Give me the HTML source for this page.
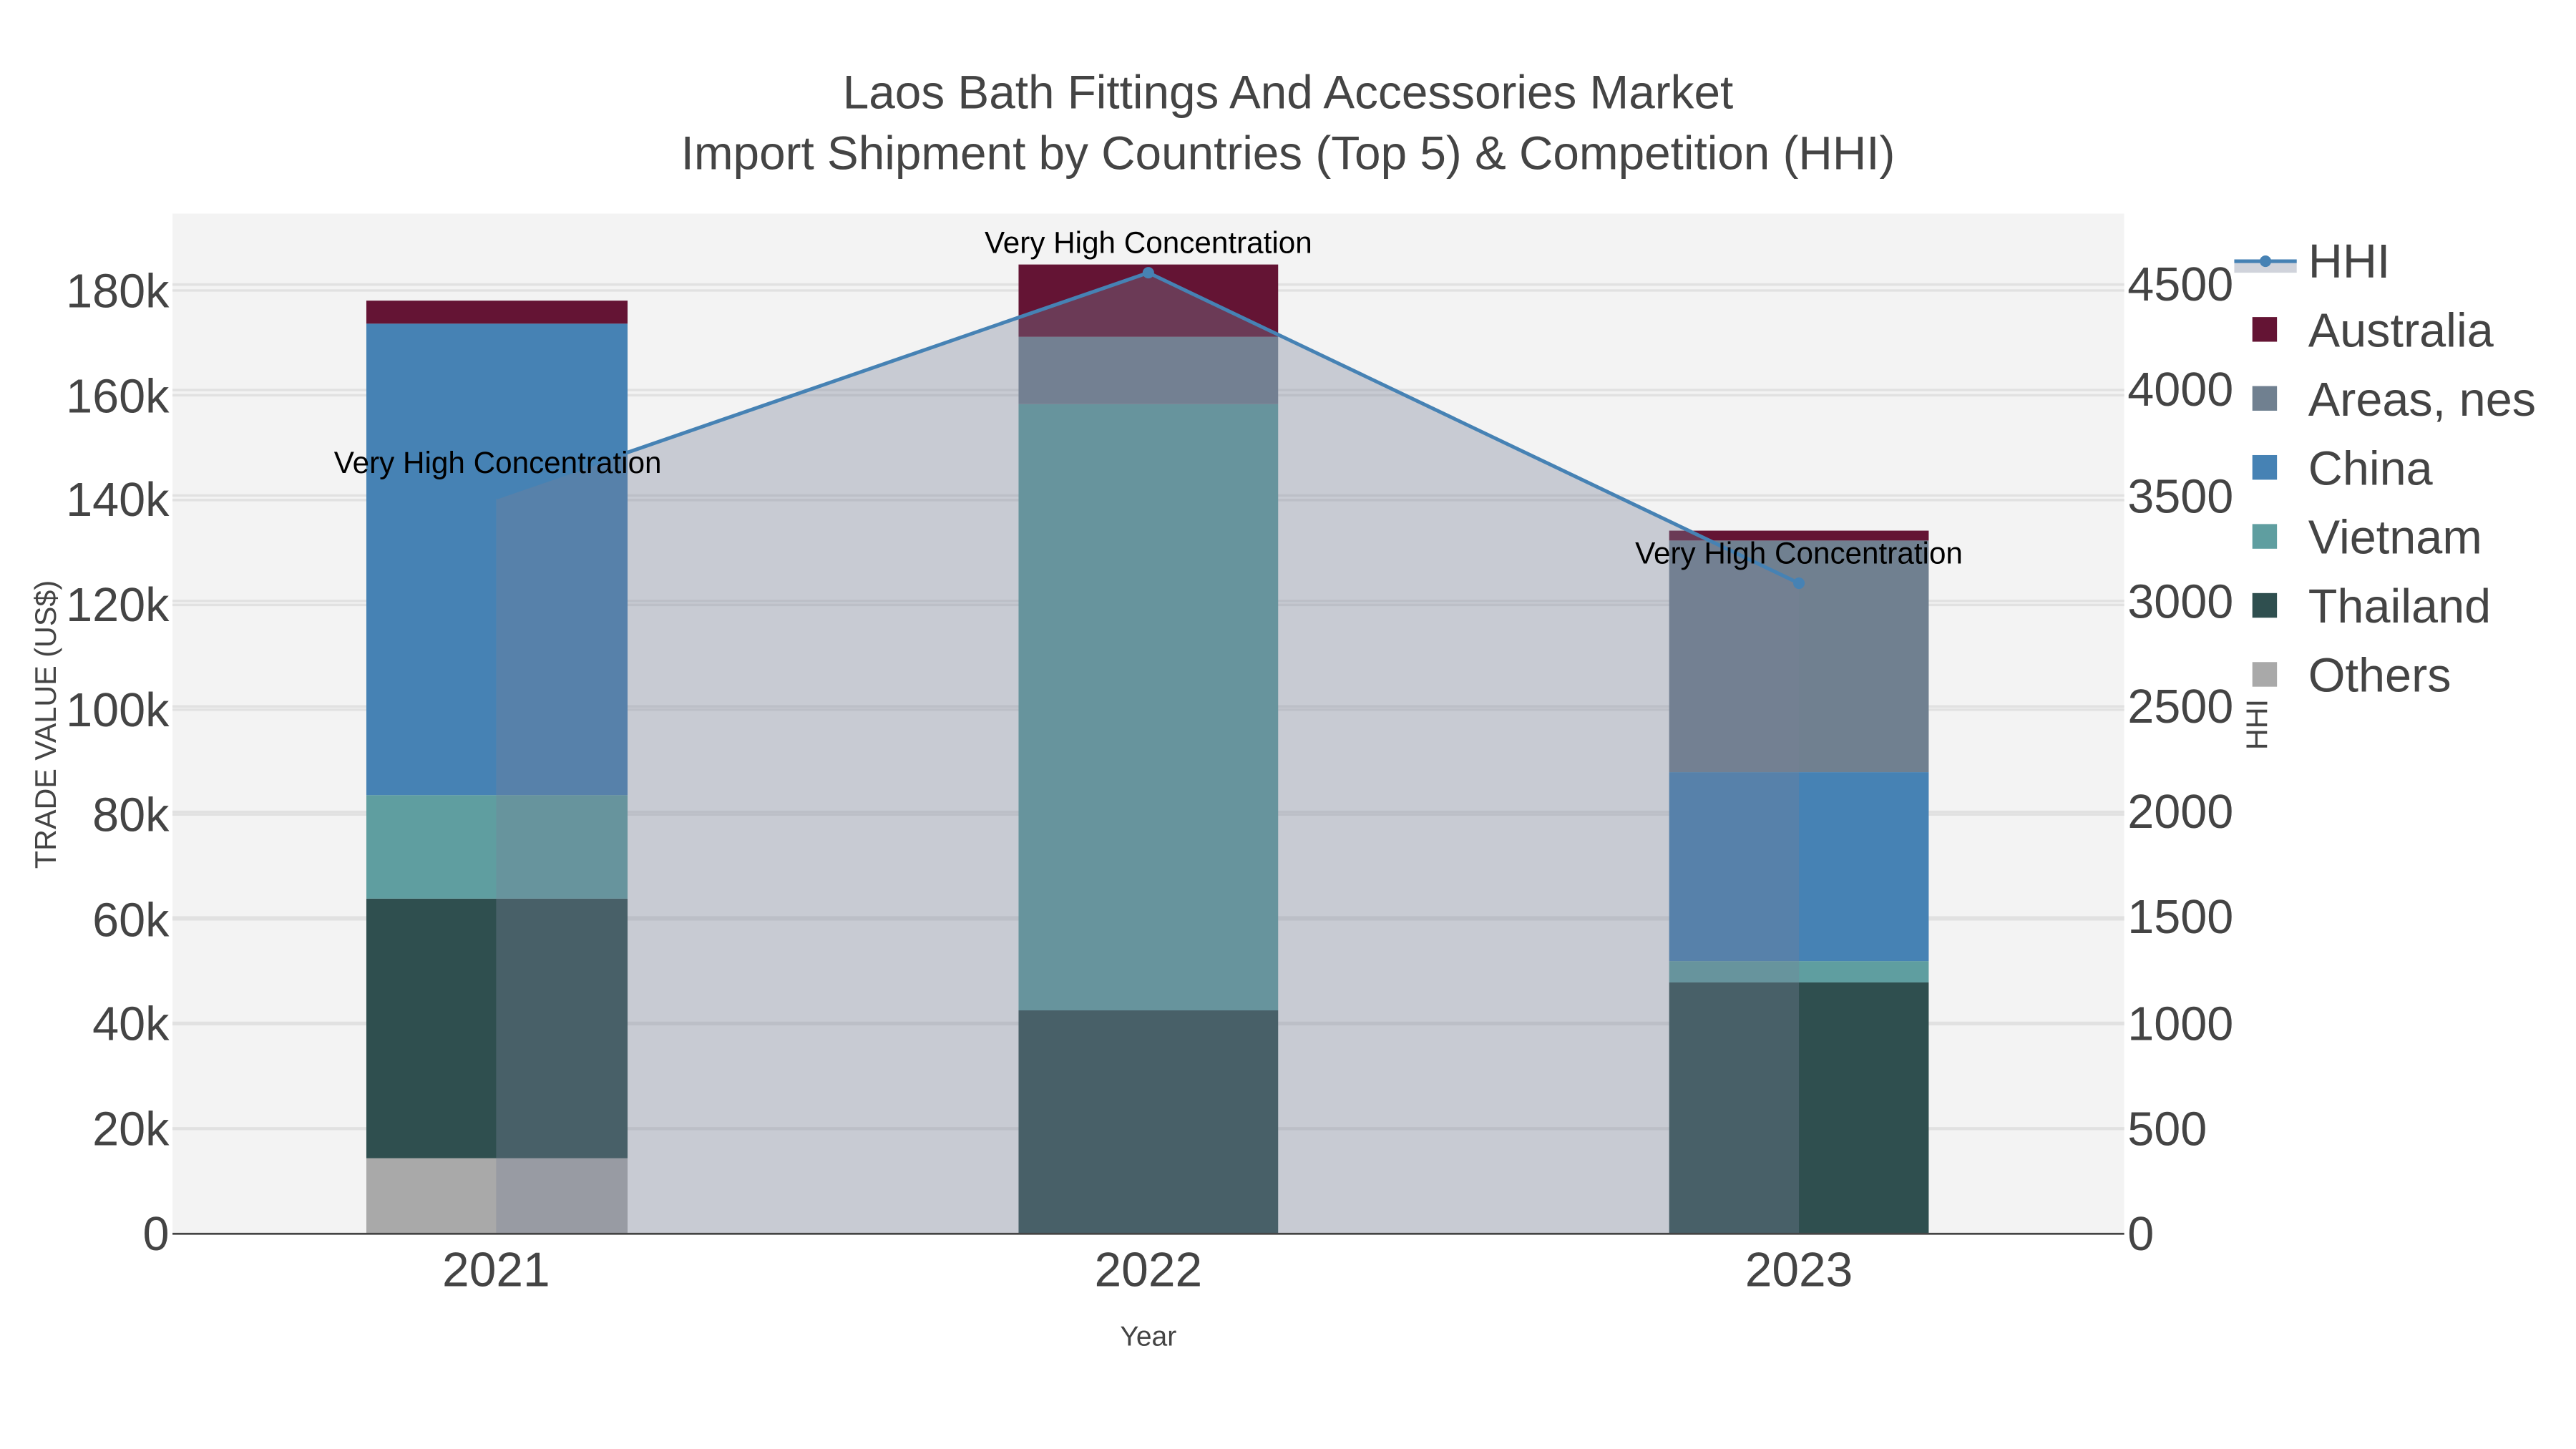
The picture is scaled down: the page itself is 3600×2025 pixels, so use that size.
<!DOCTYPE html>
<html><head><meta charset="utf-8"><style>html,body{margin:0;padding:0;background:#fff}svg{display:block}</style></head>
<body>
<svg width="3600" height="2025" viewBox="0 0 1568 882" xmlns="http://www.w3.org/2000/svg" font-family="Liberation Sans, sans-serif">
<rect x="0" y="0" width="1568" height="882" fill="#fff"/>
<rect x="105" y="130" width="1188" height="621" fill="#f3f3f3"/>
<g stroke="#e1e1e1" stroke-width="1.5">
<line x1="105" x2="1293" y1="687.2" y2="687.2"/><line x1="105" x2="1293" y1="623.4" y2="623.4"/>
<line x1="105" x2="1293" y1="559.6" y2="559.6"/><line x1="105" x2="1293" y1="495.8" y2="495.8"/>
<line x1="105" x2="1293" y1="432" y2="432"/><line x1="105" x2="1293" y1="368.2" y2="368.2"/>
<line x1="105" x2="1293" y1="304.4" y2="304.4"/><line x1="105" x2="1293" y1="240.6" y2="240.6"/>
<line x1="105" x2="1293" y1="176.8" y2="176.8"/>
<line x1="105" x2="1293" y1="686.8" y2="686.8"/><line x1="105" x2="1293" y1="622.6" y2="622.6"/>
<line x1="105" x2="1293" y1="558.4" y2="558.4"/><line x1="105" x2="1293" y1="494.2" y2="494.2"/>
<line x1="105" x2="1293" y1="430" y2="430"/><line x1="105" x2="1293" y1="365.8" y2="365.8"/>
<line x1="105" x2="1293" y1="301.6" y2="301.6"/><line x1="105" x2="1293" y1="237.4" y2="237.4"/>
<line x1="105" x2="1293" y1="173.2" y2="173.2"/>
</g>
<rect x="223" y="705" width="159" height="46" fill="#a9a9a9"/>
<rect x="223" y="547" width="159" height="158" fill="#2f4f4f"/>
<rect x="223" y="484" width="159" height="63" fill="#5f9ea0"/>
<rect x="223" y="197" width="159" height="287" fill="#4682b4"/>
<rect x="223" y="183" width="159" height="14" fill="#641434"/>
<rect x="620" y="615" width="158" height="136" fill="#2f4f4f"/>
<rect x="620" y="246" width="158" height="369" fill="#5f9ea0"/>
<rect x="620" y="205" width="158" height="41" fill="#708090"/>
<rect x="620" y="161" width="158" height="44" fill="#641434"/>
<rect x="1016" y="598" width="158" height="153" fill="#2f4f4f"/>
<rect x="1016" y="585" width="158" height="13" fill="#5f9ea0"/>
<rect x="1016" y="470" width="158" height="115" fill="#4682b4"/>
<rect x="1016" y="329" width="158" height="141" fill="#708090"/>
<rect x="1016" y="323" width="158" height="6" fill="#641434"/>
<polygon points="302,303 699,166 1095,355 1095,751 302,751" fill="rgb(120,130,152)" fill-opacity="0.35"/>
<polyline points="302,303 699,166 1095,355" fill="none" stroke="#4682b4" stroke-width="2.2"/>
<circle cx="699" cy="166" r="3.5" fill="#4682b4"/><circle cx="1095" cy="355" r="3.5" fill="#4682b4"/>
<line x1="105" x2="1293" y1="751" y2="751" stroke="#444" stroke-width="1.2"/>
<g font-size="18.4" fill="#000" text-anchor="middle">
<text x="303" y="288">Very High Concentration</text>
<text x="699" y="154">Very High Concentration</text>
<text x="1095" y="343">Very High Concentration</text>
</g>
<g font-size="29" fill="#444" text-anchor="end">
<text x="103" y="761">0</text><text x="103" y="697">20k</text><text x="103" y="633">40k</text>
<text x="103" y="570">60k</text><text x="103" y="506">80k</text><text x="103" y="442">100k</text>
<text x="103" y="378">120k</text><text x="103" y="314">140k</text><text x="103" y="251">160k</text>
<text x="103" y="187">180k</text>
</g>
<g font-size="29" fill="#444">
<text x="1295" y="761">0</text><text x="1295" y="697">500</text><text x="1295" y="633">1000</text>
<text x="1295" y="568">1500</text><text x="1295" y="504">2000</text><text x="1295" y="440">2500</text>
<text x="1295" y="376">3000</text><text x="1295" y="312">3500</text><text x="1295" y="247">4000</text>
<text x="1295" y="183">4500</text>
</g>
<g font-size="29.5" fill="#444" text-anchor="middle">
<text x="302" y="783">2021</text><text x="699" y="783">2022</text><text x="1095" y="783">2023</text>
</g>
<text x="699" y="819" font-size="17" fill="#444" text-anchor="middle">Year</text>
<text transform="translate(34,441) rotate(-90)" font-size="18" fill="#444" text-anchor="middle">TRADE VALUE (US$)</text>
<text transform="translate(1380,441) rotate(-90)" font-size="18" fill="#444" text-anchor="middle">HHI</text>
<g font-size="28.6" fill="#444" text-anchor="middle">
<text x="784" y="66">Laos Bath Fittings And Accessories Market</text>
<text x="784" y="103">Import Shipment by Countries (Top 5) &amp; Competition (HHI)</text>
</g>
<rect x="1360" y="158" width="38" height="8" fill="rgb(120,130,152)" fill-opacity="0.35"/>
<line x1="1360" x2="1398" y1="159" y2="159" stroke="#4682b4" stroke-width="2.2"/>
<circle cx="1379" cy="159" r="3.5" fill="#4682b4"/>
<rect x="1371" y="193" width="15" height="15" fill="#641434"/>
<rect x="1371" y="235" width="15" height="15" fill="#708090"/>
<rect x="1371" y="277" width="15" height="15" fill="#4682b4"/>
<rect x="1371" y="319" width="15" height="15" fill="#5f9ea0"/>
<rect x="1371" y="361" width="15" height="15" fill="#2f4f4f"/>
<rect x="1371" y="403" width="15" height="15" fill="#a9a9a9"/>
<g font-size="29" fill="#444">
<text x="1405" y="169">HHI</text><text x="1405" y="211">Australia</text><text x="1405" y="253">Areas, nes</text>
<text x="1405" y="295">China</text><text x="1405" y="337">Vietnam</text><text x="1405" y="379">Thailand</text>
<text x="1405" y="421">Others</text>
</g>
</svg>
</body></html>
